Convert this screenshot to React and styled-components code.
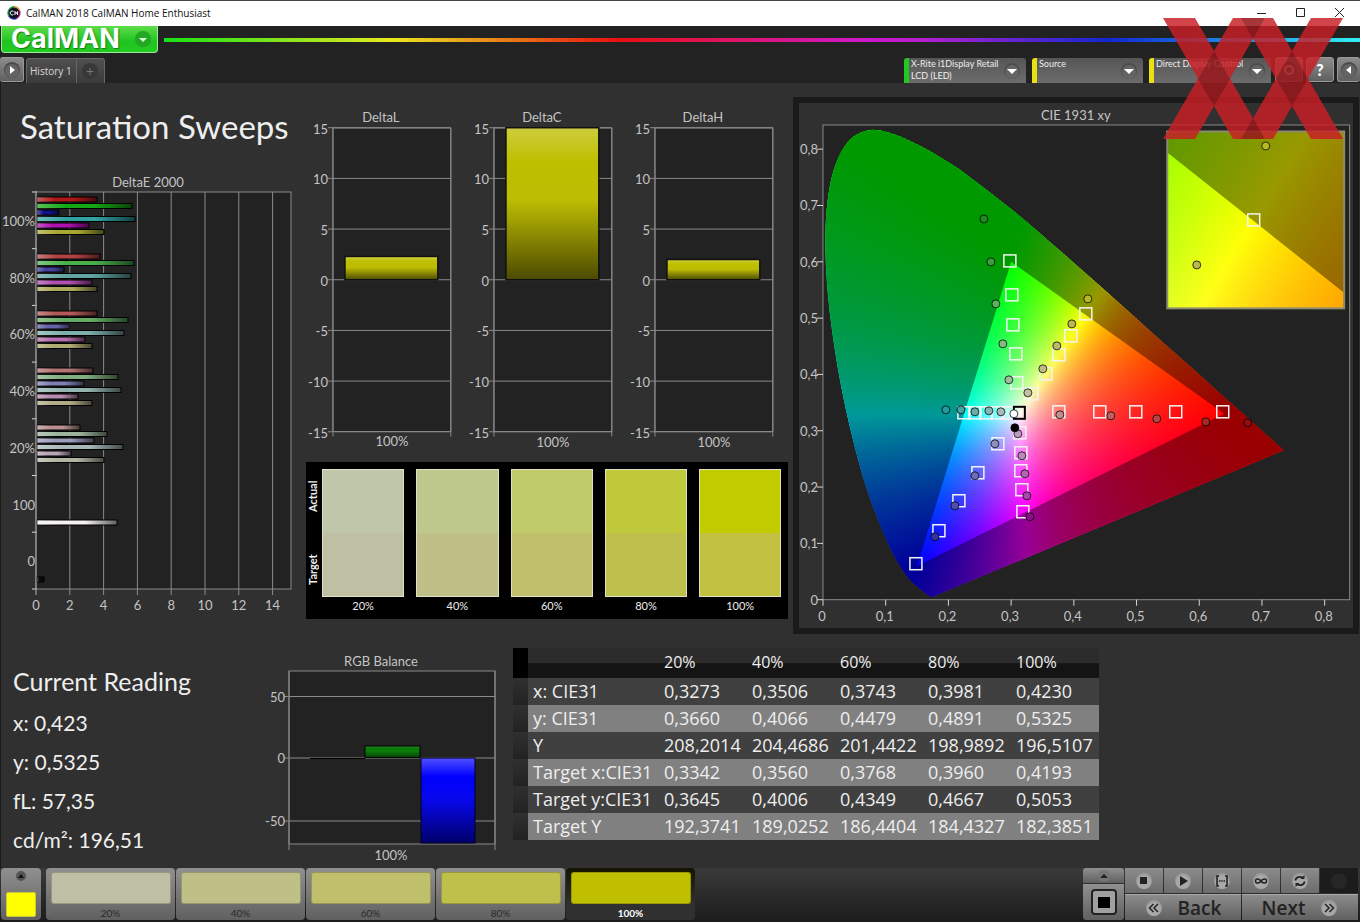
import React from 'react';
import styled, { createGlobalStyle, css } from 'styled-components';

const fonts = {
  ui: "'Lato', 'Open Sans', sans-serif",
  table: "'Open Sans', 'Noto Sans', sans-serif",
  brand: "'Inter', 'Open Sans', sans-serif"
};

const colors = {
  black: '#000000',
  frame: '#1a1a1a',
  dark: '#222222',
  panel: '#303030',
  line: '#8a8a8a',
  label: '#c4c4c4',
  text: '#eeeeee'
};

const levels = ['20%', '40%', '60%', '80%', '100%'];

/* ---------- data ---------- */

const deltaEGroups = [
  {
    label: '100%',
    bars: [
      ['#b01818', 61], ['#14a814', 96], ['#10108c', 23],
      ['#30a0a0', 99], ['#b010b0', 53], ['#a8a830', 68]
    ]
  },
  {
    label: '80%',
    bars: [
      ['#b04444', 64], ['#48b048', 98], ['#4444a0', 28],
      ['#60a4a4', 95], ['#b050b0', 56], ['#aca858', 61]
    ]
  },
  {
    label: '60%',
    bars: [
      ['#b45858', 61], ['#64ac64', 92], ['#6464a8', 34],
      ['#7cb0ac', 88], ['#b870b0', 49], ['#b0ac70', 56]
    ]
  },
  {
    label: '40%',
    bars: [
      ['#b47474', 57], ['#80b080', 82], ['#8080b4', 48],
      ['#94b4b0', 85], ['#b88cb0', 42], ['#b0ac88', 56]
    ]
  },
  {
    label: '20%',
    bars: [
      ['#b89090', 44], ['#9cb49c', 71], ['#9c9cbc', 58],
      ['#a8b8b8', 87], ['#b8a4b8', 35], ['#b4b4a4', 68]
    ]
  },
  { label: '100', bars: [null, null, null, null, null, null, ['#f4f0f4', 81]] },
  { label: '0', bars: [null, null, null, null, null, null, ['#0c0c0c', 8]] }
];

const swatches = [
  { level: '20%', actual: '#bfc7ab', target: '#bfbfa4' },
  { level: '40%', actual: '#bfc88c', target: '#bfbf88' },
  { level: '60%', actual: '#bfca68', target: '#bfbf6c' },
  { level: '80%', actual: '#bfc93a', target: '#bfbf4e' },
  { level: '100%', actual: '#c2ca00', target: '#c2c240' }
];

const patches = [
  { level: '20%', color: '#bfbfa4' },
  { level: '40%', color: '#bfbf88' },
  { level: '60%', color: '#bfbf6c' },
  { level: '80%', color: '#bfbf4c' },
  { level: '100%', color: '#bfbf00' }
];

const readings = [
  ['x: CIE31', '0,3273', '0,3506', '0,3743', '0,3981', '0,4230'],
  ['y: CIE31', '0,3660', '0,4066', '0,4479', '0,4891', '0,5325'],
  ['Y', '208,2014', '204,4686', '201,4422', '198,9892', '196,5107'],
  ['Target x:CIE31', '0,3342', '0,3560', '0,3768', '0,3960', '0,4193'],
  ['Target y:CIE31', '0,3645', '0,4006', '0,4349', '0,4667', '0,5053'],
  ['Target Y', '192,3741', '189,0252', '186,4404', '184,4327', '182,3851']
];

const locus = [
  [0.1741, 0.005], [0.1714, 0.0051], [0.1644, 0.0109], [0.1566, 0.0177],
  [0.144, 0.0297], [0.1355, 0.0399], [0.1241, 0.0578], [0.1096, 0.0868],
  [0.0913, 0.1327], [0.0687, 0.2007], [0.0454, 0.295], [0.0235, 0.4127],
  [0.0082, 0.5384], [0.0039, 0.6548], [0.0139, 0.7502], [0.0389, 0.812],
  [0.0743, 0.8338], [0.1142, 0.8262], [0.1547, 0.8059], [0.1929, 0.7816],
  [0.2296, 0.7543], [0.3016, 0.6923], [0.3731, 0.6245], [0.4441, 0.5547],
  [0.5125, 0.4866], [0.5752, 0.4242], [0.627, 0.3725], [0.6658, 0.334],
  [0.6915, 0.3083], [0.719, 0.2809], [0.7347, 0.2653]
];

const gamut = [[0.64, 0.33], [0.3, 0.6], [0.15, 0.06]];

// marker centres in chart pixels
const targetMarks = [
  [211, 158], [213, 192], [214, 222], [217, 251], [218, 280],
  [260, 309], [301, 309], [337, 309], [377, 309], [424, 309],
  [165, 310], [176, 310], [187, 310], [199, 310], [209, 310],
  [221, 330], [222, 350], [222, 368], [223, 387], [224, 409],
  [199, 341], [179, 370], [160, 398], [140, 428], [117, 461],
  [233, 291], [247, 271], [260, 252], [272, 233], [287, 211]
];

const actualMarks = [
  [185, 116, '#1f8c1f'], [192, 159, '#3f9c3f'], [197, 201, '#5fb05f'],
  [204, 241, '#80bc80'], [210, 277, '#9cc09c'],
  [289, 196, '#b8b820'], [273, 221, '#bcb850'], [258, 243, '#bcb86c'],
  [244, 266, '#c0bc88'], [229, 290, '#c0c0a4'],
  [261, 312, '#c09090'], [312, 313, '#c06060'], [358, 316, '#b84444'],
  [407, 319, '#a82828'], [449, 320, '#8c1010'],
  [147, 307, '#209c9c'], [162, 307, '#48a4a4'], [176, 309, '#68acac'],
  [190, 308, '#88b4b4'], [202, 309, '#a4bcbc'],
  [219, 331, '#bc9cbc'], [223, 353, '#bc88bc'], [226, 371, '#b468b4'],
  [228, 393, '#a848a8'], [231, 414, '#8c108c'],
  [196, 341, '#9090c0'], [176, 373, '#6c6cb8'], [156, 403, '#5050ac'],
  [136, 434, '#3434a0'],
  [216, 325, '#000000'], [215, 311, '#ffffff']
];

/* ---------- chromaticity colours ---------- */

function xyToColor(x, y) {
  const sy = Math.max(y, 0.001);
  const X = x / sy;
  const Z = (1 - x - y) / sy;
  const rgb = [
    3.2406 * X - 1.5372 - 0.4986 * Z,
    -0.9689 * X + 1.8758 + 0.0415 * Z,
    0.0557 * X - 0.204 + 1.057 * Z
  ].map(v => Math.max(v, 0));
  const max = Math.max(...rgb);
  return `rgb(${rgb.map(v => Math.round((v / max) * 255)).join(',')})`;
}

const toPoints = (list, toX, toY) =>
  list.map(([x, y]) => `${toX(x).toFixed(1)} ${toY(y).toFixed(1)}`).join('L');

// Catmull-Rom curve through the points, as bezier segments
function toCurve(list, toX, toY) {
  const pts = list.map(([x, y]) => [toX(x), toY(y)]);
  let d = `M${pts[0].join(' ')}`;
  for (let i = 0; i < pts.length - 1; i++) {
    const [a, b, c, e] = [pts[i - 1] || pts[i], pts[i], pts[i + 1], pts[i + 2] || pts[i + 1]];
    const c1 = [b[0] + (c[0] - a[0]) / 6, b[1] + (c[1] - a[1]) / 6];
    const c2 = [c[0] - (e[0] - b[0]) / 6, c[1] - (e[1] - b[1]) / 6];
    d += `C${[...c1, ...c2, ...c].map(v => v.toFixed(1)).join(' ')}`;
  }
  return `${d}Z`;
}

// Fills a rectangle of the xy plane with thin rows, each one a gradient.
function ChromaField({ id, x0, x1, y0, y1, left, top, width, height, step }) {
  const rows = Math.ceil(height / step);
  const stops = 54;
  return Array.from({ length: rows }, (_, row) => {
    const y = y1 - ((row + 0.5) / rows) * (y1 - y0);
    return (
      <g key={row}>
        <linearGradient id={`${id}${row}`}>
          {Array.from({ length: stops + 1 }, (_, i) => (
            <stop
              key={i}
              offset={i / stops}
              stopColor={xyToColor(x0 + (i / stops) * (x1 - x0), y)}
            />
          ))}
        </linearGradient>
        <rect
          x={left}
          y={top + row * step}
          width={width}
          height={step + 1}
          fill={`url(#${id}${row})`}
        />
      </g>
    );
  });
}

/* ---------- charts ---------- */

function DeltaEChart() {
  return (
    <Chart viewBox='0 0 306 450' role='img' aria-label='DeltaE 2000'>
      <defs>
        <linearGradient id='barShade'>
          <stop offset='0' stopColor='#fff' stopOpacity='0.3' />
          <stop offset='0.3' stopColor='#fff' stopOpacity='0' />
          <stop offset='0.6' stopColor='#000' stopOpacity='0' />
          <stop offset='1' stopColor='#000' stopOpacity='0.6' />
        </linearGradient>
      </defs>
      <ChartLabel x='148' y='15'>DeltaE 2000</ChartLabel>
      <Plot x='36' y='20' width='255' height='397' />
      {[0, 2, 4, 6, 8, 10, 12, 14].map(v => (
        <g key={v}>
          <GridLine x1={36 + v * 16.9} x2={36 + v * 16.9} y1='20' y2='423' />
          <ChartLabel x={36 + v * 16.9} y='438'>{v}</ChartLabel>
        </g>
      ))}
      {deltaEGroups.map((group, g) => (
        <g key={group.label}>
          <Tick x1='32' x2='37' y1={20 + g * 56.7} y2={20 + g * 56.7} />
          <ChartLabel x='35' y={54 + g * 56.7} $anchor='end'>{group.label}</ChartLabel>
          {group.bars.map((bar, i) => {
            if (!bar) return null;
            const y = 25 + g * 57 + i * 6.5 - (i > 5 ? 1 : 0);
            return (
              <g key={i}>
                <rect x='37' y={y} width={bar[1] - 1} height='5' fill={bar[0]} stroke='#000' />
                <rect x='37' y={y} width={bar[1] - 1} height='5' fill='url(#barShade)' />
              </g>
            );
          })}
        </g>
      ))}
      <Tick x1='32' x2='37' y1='417' y2='417' />
      <GridLine x1='36' x2='36' y1='20' y2='423' />
    </Chart>
  );
}

function DeltaChart({ title, value }) {
  const toY = v => 175 - v * 10.15;
  return (
    <Chart viewBox='0 0 161 350' role='img' aria-label={title}>
      <BarGradient id={`fill${title}`} stops={['#cdcd40', '#bfbf00', '#bcbc04', '#4c4a00']} />
      <ChartLabel x='75' y='17'>{title}</ChartLabel>
      <Plot x='27' y='23' width='118' height='304' />
      {[15, 10, 5, 0, -5, -10, -15].map(v => (
        <g key={v}>
          <GridLine x1='22' x2='145' y1={toY(v)} y2={toY(v)} />
          <ChartLabel x='22' y={toY(v) + 6} $anchor='end'>{v}</ChartLabel>
        </g>
      ))}
      <GridLine x1='27' x2='27' y1='23' y2='332' />
      <GridLine x1='145' x2='145' y1='23' y2='332' />
      <rect
        x='39'
        y={toY(value)}
        width='93'
        height={175 - toY(value)}
        fill={`url(#fill${title})`}
        stroke='#111'
        strokeWidth='1.5'
      />
      <ChartLabel x='86' y='342'>100%</ChartLabel>
    </Chart>
  );
}

function BarGradient({ id, stops }) {
  return (
    <linearGradient id={id} x1='0' x2='0' y1='0' y2='1'>
      {['0', '0.22', '0.48', '1'].map((offset, i) => (
        <stop key={offset} offset={offset} stopColor={stops[i]} />
      ))}
    </linearGradient>
  );
}

function RgbBalance() {
  return (
    <Chart viewBox='0 0 245 215' role='img' aria-label='RGB Balance'>
      <BarGradient id='fillBlue' stops={['#5050ff', '#0000ff', '#0808ee', '#00006a']} />
      <BarGradient id='fillGreen' stops={['#2a8a2a', '#0a7a0a', '#0a7a0a', '#064006']} />
      <ChartLabel x='113' y='15'>RGB Balance</ChartLabel>
      <Plot x='21' y='20' width='206' height='173' />
      {[[50, 45.5], [0, 107], [-50, 170]].map(([v, y]) => (
        <g key={v}>
          <GridLine x1='16' x2='227' y1={y} y2={y} />
          <ChartLabel x='17' y={y + 5} $anchor='end'>{v}</ChartLabel>
        </g>
      ))}
      <GridLine x1='21' x2='21' y1='20' y2='199' />
      <GridLine x1='227' x2='227' y1='20' y2='199' />
      <path d='M42 107.5H97' stroke='#000' />
      <rect x='97' y='95' width='55' height='11.5' fill='url(#fillGreen)' stroke='#000' />
      <rect x='153' y='107' width='54' height='85' fill='url(#fillBlue)' stroke='#00001c' />
      <ChartLabel x='123' y='209'>100%</ChartLabel>
    </Chart>
  );
}

function CieChart() {
  const toX = x => 24 + x * 627.5;
  const toY = y => 497 - y * 563.5;
  const insetX = x => 455 + (x - 0.4193) * 2760;
  const insetY = y => 118 - (y - 0.5053) * 2760;
  const locusPath = toCurve(locus, toX, toY);
  const ticks = [0, 1, 2, 3, 4, 5, 6, 7, 8];
  const name = i => (i === 0 ? '0' : `0,${i}`);
  return (
    <Chart viewBox='0 0 554 525' role='img' aria-label='CIE 1931 xy'>
      <clipPath id='locusClip'>
        <path d={locusPath} />
      </clipPath>
      <clipPath id='insetClip'>
        <rect x='369' y='29' width='177' height='177' />
      </clipPath>
      <ChartLabel x='277' y='17'>CIE 1931 xy</ChartLabel>
      <Plot x='24' y='22' width='527' height='475' />
      {ticks.map(i => (
        <g key={i}>
          <Tick x1='18' x2='24' y1={toY(i / 10)} y2={toY(i / 10)} />
          <ChartLabel x='19' y={toY(i / 10) + 5} $anchor='end'>{name(i)}</ChartLabel>
          <Tick x1={toX(i / 10)} x2={toX(i / 10)} y1='497' y2='503' />
          <ChartLabel x={toX(i / 10) - 1} y='518'>{name(i)}</ChartLabel>
        </g>
      ))}

      <g clipPath='url(#locusClip)'>
        <ChromaField
          id='field' step={2}
          x0={0} x1={0.74} y0={0} y1={472 / 563.5}
          left={24} top={25} width={0.74 * 627.5} height={472}
        />
        <path
          d={`${locusPath}M${toPoints(gamut, toX, toY)}Z`}
          fillRule='evenodd'
          fillOpacity='0.4'
        />
      </g>

      {targetMarks.map(([x, y]) => (
        <TargetMark key={`${x}-${y}`} x={x - 6} y={y - 6} width='12' height='12' />
      ))}
      <TargetMark x='215' y='304' width='11' height='12' $dark />
      {actualMarks.map(([x, y, fill]) => (
        <ActualMark key={`${x}-${y}`} cx={x} cy={y} rx='4' ry='4' fill={fill} />
      ))}

      <g clipPath='url(#insetClip)'>
        <ChromaField
          id='zoom' step={2}
          x0={0.3881} x1={0.4523} y0={0.4734} y1={0.5372}
          left={369} top={29} width={177} height={176}
        />
        <path
          d={`M369 29H546V206H369ZM${toPoints(gamut, insetX, insetY)}Z`}
          fillRule='evenodd'
          fillOpacity='0.4'
        />
      </g>
      <rect x='368.5' y='28.5' width='177' height='177' fill='none' stroke='#8c8c70' strokeWidth='2' />
      <TargetMark x='449' y='111' width='12' height='12' />
      <ActualMark cx='467' cy='43' rx='4' ry='4' fill='#b8b820' />
      <ActualMark cx='398' cy='162' rx='4' ry='4' fill='#bcb850' />
    </Chart>
  );
}

/* ---------- small drawings ---------- */

function RoundIcon({ size = 18, light, children }) {
  return (
    <svg width={size} height={size} viewBox='0 0 18 18' aria-hidden='true'>
      <circle cx='9' cy='9' r='8' fill={light ? '#9a9a9a' : '#4c4c4c'} />
      <circle cx='9' cy='10' r='7' fill={light ? '#a8a8a8' : '#646464'} />
      {children}
    </svg>
  );
}

const transport = [
  { name: 'Stop', icon: <rect x='5' y='5' width='7' height='7' fill='#222' /> },
  { name: 'Play', icon: <path d='M6 4l8 5-8 5z' fill='#222' /> },
  {
    name: 'Read series',
    icon: <path d='M6 4H4v10h2M12 4h2v10h-2M6 9h1.5M8.3 9h1.4M10.5 9H12' stroke='#222' strokeWidth='1.6' fill='none' />
  },
  {
    name: 'Read continuously',
    icon: <path d='M9 9C7.5 6.6 3.5 6 3.5 9S7.5 11.4 9 9s5.5-3 5.5 0S10.5 11.4 9 9z' stroke='#222' strokeWidth='1.5' fill='none' />
  },
  {
    name: 'Refresh',
    icon: (
      <g stroke='#222' strokeWidth='1.8' fill='none'>
        <path d='M4.5 8.5C4.5 5.500 9 3.5 12 6M13.5 9.5C13.5 12.5 9 14.5 6 12' />
        <path d='M13.5 3v4h-4zM4.5 15v-4h4z' fill='#222' stroke='none' />
      </g>
    )
  }
];

function Watermark() {
  return (
    <Overlay viewBox='0 0 180 121' aria-hidden='true'>
      <g fill='#c81f26' opacity='0.83'>
        <path d='M0 0H32L102 121H70Z' />
        <path d='M70 0H102L32 121H0Z' />
        <path d='M78 0H110L180 121H148Z' />
        <path d='M148 0H180L110 121H78Z' />
      </g>
      <path
        d='M51 33L67 61L51 88L35 61ZM129 33L145 61L129 88L113 61ZM78 0H102L90 21ZM90 100L102 121H78Z'
        fillOpacity='0.2'
      />
    </Overlay>
  );
}

/* ---------- page ---------- */

export default function App() {
  return (
    <Window>
      <GlobalStyle />
      <TitleBar>
        <svg width='14' height='14' viewBox='0 0 14 14' aria-hidden='true'>
          <path d='M7 0a7 7 0 0 1 6 4L7 7z' fill='#d8a020' />
          <path d='M13 4a7 7 0 0 1-3 9L7 7z' fill='#d0208c' />
          <path d='M10 13A7 7 0 0 1 1 10l6-3z' fill='#2030c0' />
          <path d='M1 10A7 7 0 0 1 7 0v7z' fill='#20a060' />
          <circle cx='7' cy='7' r='5.5' fill='#141420' />
          <path d='M6.5 5.5a2 2 0 1 0 0 3M8 9V5.5l1.3 2 1.3-2V9' stroke='#fff' fill='none' />
        </svg>
        <WindowName>CalMAN 2018 CalMAN Home Enthusiast</WindowName>
        <WindowButton aria-label='Minimize'>
          <svg width='10' height='10'><path d='M0 5.5h9' stroke='#222' /></svg>
        </WindowButton>
        <WindowButton aria-label='Maximize'>
          <svg width='10' height='10'><path d='M.5.5h8v8h-8z' stroke='#222' fill='none' /></svg>
        </WindowButton>
        <WindowButton aria-label='Close'>
          <svg width='10' height='10'><path d='M0 0l9 9M9 0L0 9' stroke='#222' /></svg>
        </WindowButton>
      </TitleBar>

      <BrandRow>
        <Brand>
          CalMAN
          <svg width='16' height='16' viewBox='0 0 16 16' aria-hidden='true'>
            <circle cx='8' cy='8' r='8' fill='#22a822' />
            <path d='M4 7h8l-4 4z' fill='#d8ffd0' />
          </svg>
        </Brand>
        <Spectrum />
      </BrandRow>

      <TabRow>
        <SquareButton aria-label='Show workflow'>
          <RoundIcon><path d='M7 5l5 4-5 4z' fill='#fff' /></RoundIcon>
        </SquareButton>
        <HistoryTabs>
          <HistoryTab>History 1</HistoryTab>
          <HistoryTab aria-label='Add history'>
            <svg width='18' height='18' viewBox='0 0 18 18'>
              <circle cx='9' cy='9' r='8' fill='#383838' />
              <path d='M9 6v7M5.5 9.5h7' stroke='#777' />
            </svg>
          </HistoryTab>
        </HistoryTabs>
        <Devices>
          <Device $status='#20c820'>
            <span>X-Rite i1Display Retail<br />LCD (LED)</span>
            <RoundIcon><path d='M4 7h10l-5 5z' fill='#fff' /></RoundIcon>
          </Device>
          <Device $status='#e8e010' $narrow>
            <span>Source</span>
            <RoundIcon><path d='M4 7h10l-5 5z' fill='#fff' /></RoundIcon>
          </Device>
          <Device $status='#e8e010'>
            <span>Direct Display Control</span>
            <RoundIcon><path d='M4 7h10l-5 5z' fill='#fff' /></RoundIcon>
          </Device>
        </Devices>
        <Tools>
          <SquareButton aria-label='Settings'>
            <RoundIcon><circle cx='9' cy='9' r='4' fill='none' stroke='#fff' strokeWidth='2' /></RoundIcon>
          </SquareButton>
          <SquareButton aria-label='Help'>?</SquareButton>
          <SquareButton aria-label='Collapse'>
            <RoundIcon><path d='M11 5L6 9l5 4z' fill='#fff' /></RoundIcon>
          </SquareButton>
        </Tools>
      </TabRow>

      <Workspace>
        <UpperRow>
          <section>
            <Heading>Saturation Sweeps</Heading>
            <DeltaEChart />
          </section>
          <DeltaColumn>
            <DeltaCharts>
              <DeltaChart title='DeltaL' value={2.3} />
              <DeltaChart title='DeltaC' value={15} />
              <DeltaChart title='DeltaH' value={2} />
            </DeltaCharts>
            <SwatchPanel>
              <SwatchSides>
                <span>Target</span>
                <span>Actual</span>
              </SwatchSides>
              <SwatchGrid>
                {swatches.map(s => (
                  <Swatch key={s.level}>
                    <SwatchBox $actual={s.actual} $target={s.target} />
                    {s.level}
                  </Swatch>
                ))}
              </SwatchGrid>
            </SwatchPanel>
          </DeltaColumn>
          <CiePanel>
            <CieChart />
          </CiePanel>
        </UpperRow>

        <LowerRow>
          <Reading>
            <h2>Current Reading</h2>
            <p>x: 0,423</p>
            <p>y: 0,5325</p>
            <p>fL: 57,35</p>
            <p>cd/m²: 196,51</p>
          </Reading>
          <BalanceBox>
            <RgbBalance />
          </BalanceBox>
          <DataTable>
            <colgroup>
              <col width='15' />
              <col width='131' />
              {levels.map(l => <col key={l} width='88' />)}
            </colgroup>
            <thead>
              <tr>
                <Gutter />
                <th />
                {levels.map(l => <th key={l} scope='col'>{l}</th>)}
              </tr>
            </thead>
            <tbody>
              {readings.map(([name, ...values]) => (
                <tr key={name}>
                  <Gutter />
                  <th scope='row'>{name}</th>
                  {values.map(v => <td key={v}>{v}</td>)}
                </tr>
              ))}
            </tbody>
          </DataTable>
        </LowerRow>
      </Workspace>

      <Footer>
        <CurrentColor aria-label='Current pattern'>
          <svg width='10' height='10' viewBox='0 0 10 10'>
            <circle cx='5' cy='5' r='5' fill='#555' />
            <path d='M2 7l3-4 3 4z' fill='#111' />
          </svg>
          <i />
        </CurrentColor>
        <Patches>
          {patches.map((p, i) => (
            <Patch key={p.level} $active={i === 4}>
              <PatchColor $color={p.color} />
              {p.level}
            </Patch>
          ))}
        </Patches>
        <Controls>
          <PatternColumn>
            <PatternButton aria-label='Pattern options'>
              <svg width='12' height='12' viewBox='0 0 12 12'>
                <circle cx='6' cy='6' r='6' fill='#777' />
                <path d='M2 8l4-4 4 4z' fill='#222' />
              </svg>
            </PatternButton>
            <PatternButton aria-label='Pattern window' $tall>
              <svg width='28' height='28' viewBox='0 0 28 28'>
                <rect x='2' y='2' width='24' height='24' rx='3' fill='#a0a0a0' stroke='#222' strokeWidth='2' />
                <rect x='8' y='9' width='12' height='11' fill='#000' />
              </svg>
            </PatternButton>
          </PatternColumn>
          <TransportGrid>
            {transport.map(t => (
              <TransportButton key={t.name} aria-label={t.name}>
                <RoundIcon light>{t.icon}</RoundIcon>
              </TransportButton>
            ))}
            <TransportButton aria-label='Status' $off>
              <svg width='18' height='18'><circle cx='9' cy='9' r='8' fill='#262626' /></svg>
            </TransportButton>
            <StepButton>
              <RoundIcon light>
                <path d='M8.5 5l-4 4 4 4M13 5L9 9l4 4' stroke='#222' strokeWidth='1.5' fill='none' />
              </RoundIcon>
              Back
            </StepButton>
            <StepButton>
              Next
              <RoundIcon light>
                <path d='M5 5l4 4-4 4M9.5 5l4 4-4 4' stroke='#222' strokeWidth='1.5' fill='none' />
              </RoundIcon>
            </StepButton>
          </TransportGrid>
        </Controls>
      </Footer>

      <Watermark />
    </Window>
  );
}

/* ---------- styles ---------- */

const GlobalStyle = createGlobalStyle`
  * {
    box-sizing: border-box;
    margin: 0;
  }
  body {
    background: ${colors.dark};
    font-family: ${fonts.ui};
    color: ${colors.text};
  }
  button {
    border: 0;
    padding: 0;
    font-family: inherit;
    color: inherit;
    cursor: pointer;
  }
  svg {
    display: block;
    flex: none;
  }
`;

const Window = styled.div`
  position: relative;
  display: flex;
  flex-direction: column;
  min-height: 100vh;
  background: ${colors.dark};
`;

const TitleBar = styled.header`
  display: flex;
  align-items: center;
  height: 26px;
  padding: 0 1px 2px 7px;
  border-top: 1px solid #444;
  background: #fff;
  color: #111;
`;

const WindowName = styled.h1`
  flex: 1;
  margin-left: 5px;
  font-family: ${fonts.table};
  font-size: 10px;
  font-weight: 400;
`;

const WindowButton = styled.button`
  display: grid;
  place-items: center;
  width: 39px;
  height: 23px;
  background: transparent;
`;

const BrandRow = styled.div`
  display: flex;
  align-items: center;
  height: 27px;
  gap: 6px;
`;

const Brand = styled.button`
  display: flex;
  align-items: center;
  justify-content: space-between;
  width: 157px;
  height: 27px;
  margin-left: 1px;
  padding: 0 6px 0 9px;
  border: 1px solid #9be89b;
  border-top: 0;
  border-radius: 0 0 4px 4px;
  background: linear-gradient(#5fdc4c, #1fc41f 60%, #22cc22);
  color: #fff;
  font-family: ${fonts.brand};
  font-size: 27px;
  font-weight: 700;
  line-height: 26px;
  text-shadow: 1px 1px 1px #187818;
`;

const Spectrum = styled.div`
  flex: 1;
  height: 4px;
  background: linear-gradient(
    90deg,
    #18e018,
    #e8e820 19%,
    #e81010 38%,
    #d018c8 58%,
    #b020d0 64%,
    #1028d0 79%,
    #2090e8 90%,
    #30f0f0
  );
`;

const TabRow = styled.nav`
  display: flex;
  align-items: flex-end;
  height: 30px;
`;

const SquareButton = styled.button`
  display: grid;
  place-items: center;
  width: 28px;
  height: 25px;
  margin-bottom: 1px;
  border: 1px solid #999;
  border-radius: 3px;
  background: linear-gradient(#8c8c8c, #606060);
  color: #fff;
  font-size: 16px;
  font-weight: 900;

  ${TabRow} > & {
    width: 24px;
    border-left: 0;
  }
`;

const HistoryTabs = styled.div`
  display: flex;
  height: 25px;
  margin-left: 2px;
  border: 1px solid #666;
  border-bottom: 0;
  border-radius: 3px 3px 0 0;
  background: linear-gradient(#505050, #3a3a3a);
`;

const HistoryTab = styled.button`
  display: grid;
  place-items: center;
  min-width: 28px;
  padding: 0 4px 0 3px;
  background: transparent;
  color: #d8d8d8;
  font-family: ${fonts.table};
  font-size: 10px;

  & + & {
    border-left: 1px solid #666;
  }
`;

const Devices = styled.div`
  display: flex;
  gap: 6px;
  margin-left: auto;
`;

const Device = styled.button`
  display: flex;
  align-items: center;
  justify-content: space-between;
  width: ${props => (props.$narrow ? 111 : 122)}px;
  height: 25px;
  padding: 0 5px 0 2px;
  border-left: 5px solid ${props => props.$status};
  border-radius: 3px 3px 0 0;
  background: linear-gradient(#565656, #6c6c6c);
  font-size: 9px;
  line-height: 12px;
  text-align: left;
  white-space: nowrap;

  span {
    flex: 1;
    align-self: flex-start;
    width: 0;
  }
`;

const Tools = styled.div`
  display: flex;
  gap: 3px;
  margin-left: 4px;

  & > :last-child {
    width: 23px;
    border-right: 0;
  }
`;

const Workspace = styled.main`
  flex: 1;
  background: ${colors.panel};
  box-shadow: inset 1px 0 ${colors.frame};
`;

const UpperRow = styled.div`
  display: grid;
  grid-template-columns: 27fr 43fr 50fr;
  align-items: start;
`;

const Heading = styled.h2`
  padding: 22px 0 25px 20px;
  font-size: 33px;
  font-weight: 400;
  line-height: 42px;
`;

const DeltaColumn = styled.section`
  padding: 22px 5px 0 0;
`;

const DeltaCharts = styled.div`
  display: grid;
  grid-template-columns: repeat(3, 1fr);
`;

const SwatchPanel = styled.div`
  display: grid;
  grid-template-columns: 16px 1fr;
  margin-top: 7px;
  padding: 7px 7px 4px 0;
  background: ${colors.black};
  font-size: 11px;
`;

const SwatchSides = styled.div`
  display: flex;
  justify-content: space-between;
  height: 128px;
  padding: 12px 0;
  font-weight: 700;
  line-height: 14px;
  writing-mode: vertical-rl;
  transform: rotate(180deg);
`;

const SwatchGrid = styled.div`
  display: grid;
  grid-template-columns: repeat(5, 1fr);
  gap: 12px;
`;

const Swatch = styled.div`
  display: flex;
  flex-direction: column;
  align-items: center;
  line-height: 18px;
`;

const SwatchBox = styled.div`
  width: 100%;
  height: 128px;
  border: 1px solid #dfe0c4;
  background: linear-gradient(
    ${props => props.$actual} 50%,
    ${props => props.$target} 50%
  );
`;

const CiePanel = styled.section`
  margin: 14px 1px 0 0;
  border: 6px solid ${colors.frame};
`;

const LowerRow = styled.div`
  display: grid;
  grid-template-columns: 268fr 245fr 847fr;
  align-items: start;
`;

const Reading = styled.section`
  padding: 25px 0 0 13px;

  h2 {
    font-size: 25px;
    font-weight: 400;
    line-height: 44px;
  }

  p {
    font-size: 21px;
    line-height: 39px;
  }
`;

const BalanceBox = styled.section`
  padding-top: 17px;
`;

const DataTable = styled.table`
  width: 586px;
  margin-top: 14px;
  border-collapse: collapse;
  table-layout: fixed;
  font-family: ${fonts.table};
  font-size: 18px;
  line-height: 27px;

  th,
  td {
    height: 27px;
    padding: 0 0 0 5px;
    font-weight: 400;
    text-align: left;
    white-space: nowrap;
  }

  thead th {
    height: 30px;
    background: linear-gradient(#2c2c2c 50%, #141414 52%);
    font-size: 16px;
  }

  tbody tr {
    background: #404040;
  }

  tbody tr:nth-child(even) {
    background: #808080;
  }
`;

const Gutter = styled.td`
  thead & {
    background: #000;
  }

  tbody & {
    background: linear-gradient(#303030, #222);
  }
`;

const raised = css`
  background: linear-gradient(#909090, #606060);
`;

const Footer = styled.footer`
  display: flex;
  height: 54px;
  padding: 0 2px 2px 1px;
  background: linear-gradient(#3a3a3a, #1c1c1c);
`;

const CurrentColor = styled.button`
  display: flex;
  flex-direction: column;
  align-items: center;
  justify-content: space-between;
  width: 40px;
  padding: 3px 4px;
  border-radius: 4px;
  ${raised}

  i {
    width: 30px;
    height: 25px;
    border: 1px solid #c8c840;
    border-radius: 2px;
    background: #ffff00;
  }
`;

const Patches = styled.div`
  display: flex;
  gap: 1px;
  margin-left: 5px;
`;

const Patch = styled.button`
  display: flex;
  flex-direction: column;
  align-items: center;
  width: 129px;
  padding: 4px 4px 0;
  border-radius: 4px;
  color: #2a2a2a;
  font-size: 10px;
  line-height: 12px;
  ${raised}
  ${props =>
    props.$active &&
    css`
      background: linear-gradient(#141400, #303030 70%);
      color: #fff;
      font-weight: 700;
    `}
`;

const PatchColor = styled.span`
  width: 120px;
  height: 32px;
  margin-bottom: 3px;
  border: 1px solid rgba(0, 0, 0, 0.2);
  border-radius: 3px;
  background: ${props => props.$color};
`;

const Controls = styled.div`
  display: flex;
  gap: 1px;
  margin-left: auto;
`;

const PatternColumn = styled.div`
  display: flex;
  flex-direction: column;
  gap: 1px;
  width: 41px;
`;

const PatternButton = styled.button`
  display: grid;
  place-items: center;
  height: ${props => (props.$tall ? 36 : 15)}px;
  border-radius: ${props => (props.$tall ? '0 0 3px 3px' : '3px 3px 0 0')};
  ${raised}
`;

const TransportGrid = styled.div`
  display: grid;
  grid-template-columns: repeat(6, 38px);
  grid-template-rows: 25px 26px;
  gap: 1px;
`;

const TransportButton = styled.button`
  display: grid;
  place-items: center;
  background: ${props =>
    props.$off ? '#1c1c1c' : 'linear-gradient(#8c8c8c, #6c6c6c)'};
`;

const StepButton = styled.button`
  display: flex;
  grid-column: span 3;
  align-items: center;
  justify-content: center;
  gap: 15px;
  border-top: 1px solid #aaa;
  background: linear-gradient(#8c8c8c, #606060);
  color: #222;
  font-family: ${fonts.table};
  font-size: 19px;
  font-weight: 600;
  line-height: 24px;
`;

const Overlay = styled.svg`
  position: absolute;
  top: 18px;
  right: 17px;
  width: 180px;
  height: 121px;
  pointer-events: none;
`;

const Chart = styled.svg`
  display: block;
  width: 100%;
  height: auto;
  min-width: 0;
  overflow: visible;
`;

const ChartLabel = styled.text`
  fill: ${colors.label};
  font-family: ${fonts.ui};
  font-size: 13px;
  text-anchor: ${props => props.$anchor || 'middle'};
`;

const Plot = styled.rect`
  fill: ${colors.dark};
  stroke: ${colors.line};
`;

const GridLine = styled.line`
  stroke: ${colors.line};
`;

const Tick = styled.line`
  stroke: #d8d8d8;
`;

const TargetMark = styled.rect`
  fill: none;
  stroke: ${props => (props.$dark ? '#000' : '#f4f4f4')};
  stroke-width: ${props => (props.$dark ? 2 : 1.5)};
`;

const ActualMark = styled.ellipse`
  stroke: rgba(0, 0, 0, 0.75);
`;
